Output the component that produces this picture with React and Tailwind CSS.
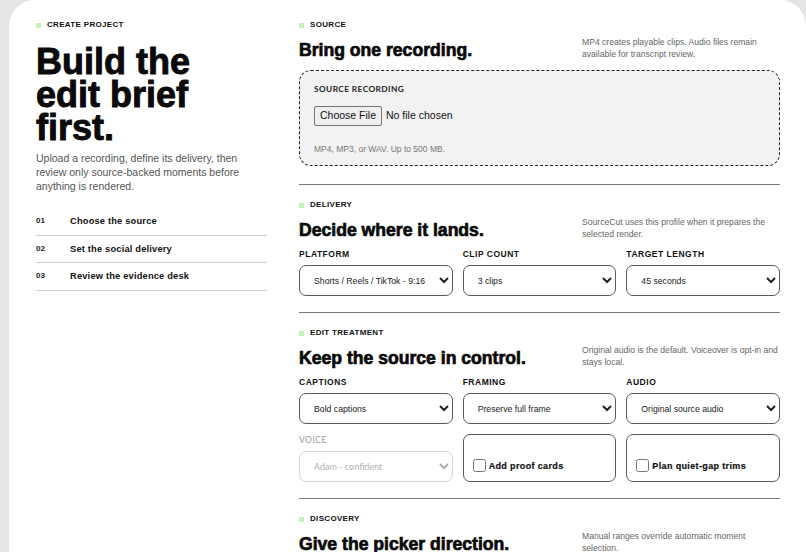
import React from 'react';

const steps = [
    { n: '01', label: 'Choose the source' },
    { n: '02', label: 'Set the social delivery' },
    { n: '03', label: 'Review the evidence desk' },
];

const SectionLabel = ({ children }) => (
    <div className="flex items-center gap-[6px] text-[8px] leading-[10px] font-bold tracking-[0.04em] text-[#111]">
        <span className="w-[5px] h-[5px] bg-[#c2f2b9]" />
        {children}
    </div>
);

const SectionHead = ({ label, title, note }) => (
    <>
        <SectionLabel>{label}</SectionLabel>
        <div className="mt-[6px] h-[24px] flex items-end justify-between">
            <h2 className="text-[17.6px] leading-[20px] font-bold text-[#0a0a0a] [-webkit-text-stroke:0.7px_#0a0a0a]">{title}</h2>
            <p className="w-[198px] text-[8.6px] leading-[12px] text-[#666]">{note}</p>
        </div>
    </>
);

const Field = ({ label, value }) => (
    <label className="flex flex-col gap-[6px]">
        <span className="text-[8.5px] leading-[10px] font-bold tracking-[0.06em] text-[#111]">{label}</span>
        <select
            defaultValue={value}
            className="h-[31px] w-full rounded-[7px] border border-[#5a5a5a] bg-white pl-[10px] pr-[5px] text-[8.7px] text-[#222]"
        >
            <option>{value}</option>
        </select>
    </label>
);

const CheckCard = ({ label }) => (
    <label className="h-[48px] rounded-[7px] border border-[#5a5a5a] flex items-end gap-[3px] px-[9px] pb-[8px]">
        <input type="checkbox" className="w-[13px] h-[13px] mb-[1px]" />
        <span className="text-[9px] leading-[14px] font-bold tracking-[0.04em] text-[#111] [-webkit-text-stroke:0.2px_#111]">{label}</span>
    </label>
);

export default function App() {
    return (
        <div className="h-screen overflow-hidden bg-[#e5e5e5] pl-[9px] font-['Liberation_Sans',Arial,sans-serif]">
            <div className="min-h-full rounded-t-[26px] bg-white pl-[27px] pr-[26px] pt-[20px] flex gap-[32px]">
                {/* Intro column */}
                <aside className="w-[231px] shrink-0">
                    <SectionLabel>CREATE PROJECT</SectionLabel>
                    <h1 className="mt-[15px] text-[36px] leading-[33px] font-bold text-[#0a0a0a] [-webkit-text-stroke:0.9px_#0a0a0a]">
                        Build the<br />edit brief<br />first.
                    </h1>
                    <p className="mt-[7px] text-[10.5px] leading-[14px] text-[#555]">
                        Upload a recording, define its delivery, then review only source-backed moments before anything is rendered.
                    </p>
                    <ol className="mt-[15px]">
                        {steps.map((s) => (
                            <li key={s.n} className="flex py-[8px] border-b border-[#cfcfcf] leading-[10.5px]">
                                <span className="w-[34px] text-[8px] font-bold text-[#222]">{s.n}</span>
                                <span className="text-[9.3px] font-bold tracking-[0.02em] text-[#111]">{s.label}</span>
                            </li>
                        ))}
                    </ol>
                </aside>

                {/* Form column */}
                <main className="flex-1">
                    <section className="pb-[18px]">
                        <SectionHead
                            label="SOURCE"
                            title="Bring one recording."
                            note="MP4 creates playable clips. Audio files remain available for transcript review."
                        />
                        <div className="mt-[10px] h-[96px] rounded-[12px] border-[1.5px] border-dashed border-[#222] bg-[#f2f2f2] px-[14px] pt-[13px]">
                            <div className="font-['Lato',sans-serif] text-[8.3px] leading-[10px] font-bold tracking-[0.05em] text-[#222]">
                                SOURCE RECORDING
                            </div>
                            <input
                                type="file"
                                className="mt-[12px] block text-[10.5px] text-[#111] file:mr-[4px] file:rounded-[2px] file:border file:border-[#767676] file:bg-[#efefef] file:px-[5px] file:py-[1px] file:text-[10.5px]"
                            />
                            <div className="mt-[18px] text-[8.5px] leading-[10px] text-[#777]">MP4, MP3, or WAV. Up to 500 MB.</div>
                        </div>
                    </section>

                    <section className="border-t border-[#777] pt-[15px] pb-[16px]">
                        <SectionHead
                            label="DELIVERY"
                            title="Decide where it lands."
                            note="SourceCut uses this profile when it prepares the selected render."
                        />
                        <div className="mt-[9px] grid grid-cols-3 gap-[10px]">
                            <Field label="PLATFORM" value="Shorts / Reels / TikTok - 9:16" />
                            <Field label="CLIP COUNT" value="3 clips" />
                            <Field label="TARGET LENGTH" value="45 seconds" />
                        </div>
                    </section>

                    <section className="border-t border-[#777] pt-[15px] pb-[16px]">
                        <SectionHead
                            label="EDIT TREATMENT"
                            title="Keep the source in control."
                            note="Original audio is the default. Voiceover is opt-in and stays local."
                        />
                        <div className="mt-[9px] grid grid-cols-3 gap-[10px] items-end">
                            <Field label="CAPTIONS" value="Bold captions" />
                            <Field label="FRAMING" value="Preserve full frame" />
                            <Field label="AUDIO" value="Original source audio" />
                            <label className="flex flex-col gap-[6px] font-['Lato',sans-serif]">
                                <span className="text-[8.5px] leading-[10px] tracking-[0.06em] text-[#999]">VOICE</span>
                                <select
                                    disabled
                                    className="h-[31px] w-full rounded-[7px] border border-[#d4d4d4] bg-white pl-[10px] pr-[5px] text-[9px] text-[#b0b0b0]"
                                >
                                    <option>Adam - confident</option>
                                </select>
                            </label>
                            <CheckCard label="Add proof cards" />
                            <CheckCard label="Plan quiet-gap trims" />
                        </div>
                    </section>

                    <section className="border-t border-[#777] pt-[15px] pb-[16px]">
                        <SectionHead
                            label="DISCOVERY"
                            title="Give the picker direction."
                            note="Manual ranges override automatic moment selection."
                        />
                    </section>
                </main>
            </div>
        </div>
    );
}
